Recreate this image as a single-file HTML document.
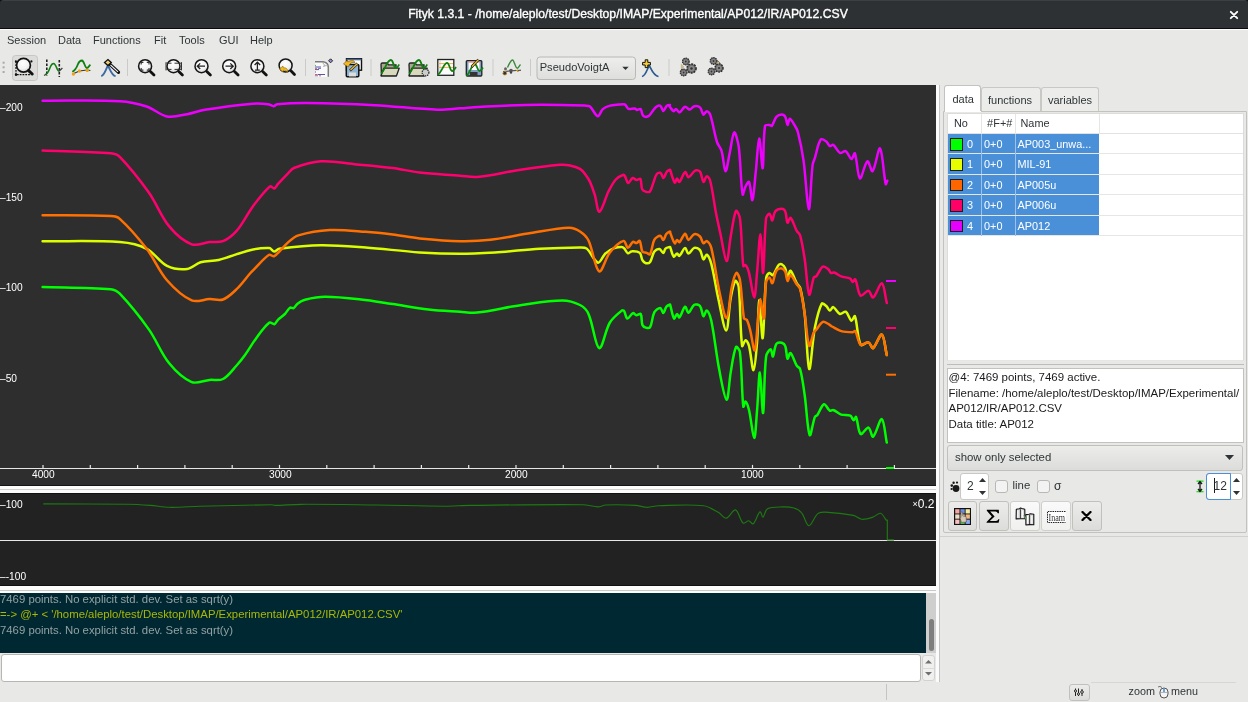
<!DOCTYPE html>
<html><head><meta charset="utf-8">
<style>
*{box-sizing:border-box}
html{background:#000}
html,body{margin:0;padding:0;width:1248px;height:702px;overflow:hidden;background:#e8e8e7;font-family:"Liberation Sans",sans-serif;font-size:11.4px;color:#2e3436}
.a{position:absolute}
#title{left:0;top:0;width:1248px;height:29px;background:#2d3133;border-top:1px solid #3b4043;border-bottom:1.5px solid #0a0a0a;border-radius:4px 4px 0 0}
#title .t{left:0;width:1256px;top:5.5px;text-align:center;color:#fff;font-weight:normal;font-size:12.2px;-webkit-text-stroke:0.35px #fff}
#menubar{left:0;top:29px;width:1248px;height:22px;background:#e8e8e7;border-top:1px solid #fcfcfc;border-bottom:1px solid #d5d5d3}
#menubar span{position:absolute;top:3.6px;font-size:11px}
#toolbar{left:0;top:50px;width:1248px;height:35px;background:#e8e8e7}
#plot{left:0;top:85px;width:936px;height:401px;background:#2e2e2e;border-bottom:1px solid #161616}
#strip1{left:0;top:486px;width:936px;height:7px;background:linear-gradient(#fdfdfd 0,#fdfdfd 3px,#d2d2cf 3px,#d2d2cf 4px,#fbfbfb 4px)}
#resid{left:0;top:493px;width:936px;height:93px;background:#222;border-top:1px solid #111;border-bottom:1px solid #111}
#strip2{left:0;top:586px;width:936px;height:7px;background:linear-gradient(#fdfdfd 0,#fdfdfd 4px,#c9c9c6 4px,#c9c9c6 5px,#fbfbfb 5px)}
#console{left:0;top:593px;width:926px;height:60px;background:#002833}
#console div{position:absolute;left:0;white-space:nowrap;font-size:11.35px;color:#93a1a1}
#cscroll{left:926px;top:593px;width:10px;height:60px;background:#cfcfce}
#cthumb{left:929px;top:619px;width:5px;height:32px;background:#7e7e7e;border-radius:3px}
#input{left:1px;top:654px;width:920px;height:28px;background:#fff;border:1px solid #b6b6b3;border-radius:3px}
#vline{left:939px;top:85px;width:1px;height:597px;background:#c4c4c2}
#vstrip{left:936px;top:85px;width:3px;height:597px;background:#fbfbfb}
#status{left:0;top:682px;width:1248px;height:20px;background:#e8e8e7}
.ax{color:#fff;font-size:10.2px;white-space:nowrap}
.tab span,.ttx,.ui,.info{position:absolute;white-space:nowrap}
.tab span{font-size:11px;color:#2e3436}
.ttx{font-size:10.9px;color:#2e3436}
.info{font-size:11.48px;line-height:15.5px;color:#1a1a1a}
.btn{background:linear-gradient(#ececeb,#dcdcda);border:1px solid #c0c0bd;border-radius:3px}
.btnl{background:linear-gradient(#fafafa,#f0f0ef);border:1px solid #cfcfcc;border-radius:3px}
.row{position:absolute;left:948px;width:295px;height:20.4px;border-bottom:1px solid #e6e6e4}
.sel{position:absolute;left:948px;width:151px;height:19.4px;background:#4a90d9}
.rtx{position:absolute;font-size:10.9px;color:#fff;white-space:nowrap}
#wrap{position:absolute;left:0;top:0;width:1248px;height:702px;will-change:transform;background:#e8e8e7}
</style></head><body><div id="wrap">
<div class="a" style="left:0;top:0;width:1248px;height:6px;background:#111"></div>
<div id="title" class="a"><div class="t a">Fityk 1.3.1 - /home/aleplo/test/Desktop/IMAP/Experimental/AP012/IR/AP012.CSV</div>
<svg class="a" style="left:1229px;top:9px" width="10" height="10" viewBox="0 0 10 10"><path d="M1.8 1.8 L8.2 8.2 M8.2 1.8 L1.8 8.2" stroke="#fff" stroke-width="1.9" stroke-linecap="round"/></svg></div>
<div id="menubar" class="a">
<span style="left:7px">Session</span><span style="left:58px">Data</span><span style="left:93px">Functions</span><span style="left:154px">Fit</span><span style="left:179px">Tools</span><span style="left:219px">GUI</span><span style="left:250px">Help</span>
</div>
<div id="toolbar" class="a"></div>
<svg class="a" style="left:0;top:50px" width="740" height="35" viewBox="0 50 740 35">
<defs>
<radialGradient id="lens" cx="0.45" cy="0.35" r="0.7"><stop offset="0" stop-color="#ffffff"/><stop offset="0.6" stop-color="#f2f2f2"/><stop offset="1" stop-color="#c8c8c8"/></radialGradient>
<g id="mag">
<circle cx="0" cy="0" r="6.5" fill="url(#lens)" stroke="#151515" stroke-width="1.5"/>
<line x1="5.3" y1="5.3" x2="8.9" y2="8.9" stroke="#111" stroke-width="2.8" stroke-linecap="round"/>
</g>
<g id="gear"><circle r="3.4" fill="#6a6a6a" stroke="#2a2a2a" stroke-width="1.1" stroke-dasharray="1.4 0.8"/><circle r="2.1" fill="#8a8a8a"/><circle r="0.9" fill="#333"/></g>
</defs>
<!-- grip -->
<g fill="#a8a8a6"><rect x="2.6" y="61.7" width="2" height="2"/><rect x="2.6" y="66.3" width="2" height="2"/><rect x="2.6" y="71" width="2" height="2"/></g>
<!-- toggle button -->
<rect x="12.5" y="55.5" width="25" height="25" rx="3" fill="#dcdcda" stroke="#c6c6c4" stroke-width="1"/>
<!-- icon1 -->
<g stroke="#111" stroke-width="1.2" fill="none"><path d="M16 61.5 L16 74.6 L31 74.6" stroke-dasharray="1.8 1"/></g>
<circle cx="15.9" cy="61.4" r="1.1" fill="#111"/><circle cx="31.4" cy="61.4" r="1.1" fill="#111"/><circle cx="16" cy="74.7" r="1.2" fill="#111"/>
<circle cx="23.5" cy="65.2" r="6.9" fill="url(#lens)" stroke="#111" stroke-width="1.7"/>
<line x1="28.6" y1="70.6" x2="32.2" y2="74" stroke="#111" stroke-width="3" stroke-linecap="round"/>
<!-- icon2 -->
<g stroke="#222" stroke-width="1.6" stroke-dasharray="2.4 1.6"><line x1="46.8" y1="59.6" x2="46.8" y2="76"/><line x1="59.3" y1="60" x2="59.3" y2="77"/></g>
<path d="M45.5 74.8 C 48.5 73, 49.5 69, 50.5 66.5 C 51.5 64.3, 52.5 63.5, 53.7 63.5 C 56 63.6, 57 71.3, 59.2 71.3" stroke="#108010" stroke-width="1.6" fill="none"/>
<path d="M59 71.3 L62.4 68 M44 75.5 L46.5 74" stroke="#444" stroke-width="1.3"/>
<!-- icon3 -->
<path d="M72.5 74 L79.5 71 L87 70 L90.4 70.5" stroke="#333" stroke-width="1.1" fill="none"/>
<path d="M72.3 71.8 C 75 70.5, 76.5 68, 77.8 64.5 C 79 61.5, 80.5 60.5, 81.9 60.5 C 84.3 60.8, 84.8 68, 86.8 68 C 88.2 68, 89 66, 90.4 64.6" stroke="#108010" stroke-width="1.8" fill="none"/>
<g fill="#f0a010"><circle cx="73.4" cy="74.1" r="1.7"/><circle cx="79.5" cy="71" r="1.7"/><circle cx="87.2" cy="70.4" r="1.7"/></g>
<!-- icon4 -->
<path d="M101.2 76.1 C 104.5 75.5, 106 69, 107.9 65.5 C 110 69, 111.5 75.5, 115.6 76.1" stroke="#3b6aa3" stroke-width="1.9" fill="none"/>
<line x1="110" y1="64.5" x2="118.5" y2="72.3" stroke="#111" stroke-width="3.2" stroke-linecap="round"/>
<line x1="110.5" y1="65" x2="118" y2="71.8" stroke="#eee" stroke-width="1.1"/>
<path d="M107.9 59.5 L111.3 62.5 L107.9 65.6 L104.5 62.5 Z" fill="#f0cc70" stroke="#111" stroke-width="1.3"/>
<!-- separators -->
<g stroke="#cacac8" stroke-width="1"><line x1="127.5" y1="59" x2="127.5" y2="76"/><line x1="305.5" y1="59" x2="305.5" y2="76"/><line x1="371" y1="59" x2="371" y2="76"/><line x1="493" y1="59" x2="493" y2="76"/><line x1="530.5" y1="59" x2="530.5" y2="76"/><line x1="669" y1="59" x2="669" y2="76"/></g>
<!-- zoom icons -->
<use href="#mag" x="145.1" y="66.2"/>
<g stroke="#333" stroke-width="1.1" fill="none"><path d="M141.2 64.6 V62.4 H143.4 M146.8 62.4 H149 V64.6 M149 67.9 V70.1 H146.8 M143.4 70.1 H141.2 V67.9"/></g>
<use href="#mag" x="173.5" y="66.2"/>
<g stroke="#333" stroke-width="1"><line x1="166.5" y1="63.2" x2="171.5" y2="63.2"/><line x1="174.5" y1="63.2" x2="181" y2="63.2"/><line x1="166.5" y1="69.4" x2="171.5" y2="69.4"/><line x1="174.5" y1="69.4" x2="181" y2="69.4"/><line x1="166" y1="62.2" x2="166" y2="70.4"/><line x1="181.5" y1="62.2" x2="181.5" y2="70.4"/></g>
<use href="#mag" x="201.5" y="66.2"/>
<path d="M205 66.2 H197.5 M200.2 63.4 L197.3 66.2 L200.2 69" stroke="#222" stroke-width="1.3" fill="none"/>
<use href="#mag" x="229.2" y="66.2"/>
<path d="M225.5 66.2 H233 M230.3 63.4 L233.2 66.2 L230.3 69" stroke="#222" stroke-width="1.3" fill="none"/>
<use href="#mag" x="257.4" y="66.2"/>
<path d="M257.4 70 V62.3 M254.6 65 L257.4 62.2 L260.2 65 M255 70.2 H259.8" stroke="#222" stroke-width="1.3" fill="none"/>
<use href="#mag" x="285.6" y="65.5"/>
<path d="M279.5 69 L283 66 L283.3 67.8 C 286 67.6, 288 68.5, 287.5 72.5 C 286.5 70.5, 285 70.2, 283.3 70.3 L283 72 Z" fill="#f4bb20" stroke="#8a6a10" stroke-width="0.6"/>
<!-- icon11 doc -->
<rect x="315" y="62" width="13" height="15" fill="#fafafa"/>
<path d="M315 61.8 H323 Q328.2 62.5 328.3 67 V76.8" stroke="#7a7a7a" stroke-width="1.5" fill="none"/>
<path d="M322.5 62.5 Q 326 65.5 323.5 66.5 Q 327 64.5 328 67" stroke="#999" stroke-width="0.8" fill="#eee"/>
<g stroke-width="0.9"><line x1="315" y1="65.4" x2="316" y2="65.4" stroke="#3a3"/><line x1="315" y1="67" x2="321" y2="67" stroke="#44a"/><line x1="315" y1="68.4" x2="317" y2="68.4" stroke="#e53"/><line x1="318" y1="68.4" x2="321" y2="68.4" stroke="#66a"/><line x1="315" y1="69.6" x2="319" y2="69.6" stroke="#44a"/><line x1="315" y1="72" x2="316" y2="72" stroke="#44a"/><line x1="315" y1="74.5" x2="317" y2="74.5" stroke="#e43"/><line x1="317.5" y1="74.5" x2="325" y2="74.5" stroke="#44a"/><line x1="315" y1="75.8" x2="318" y2="75.8" stroke="#66a"/><line x1="319" y1="75.8" x2="321" y2="75.8" stroke="#e53"/></g>
<path d="M330.6 58.8 L332.6 60.8 L330.6 62.8 L328.6 60.8 Z" fill="#9a8ad8" stroke="#222" stroke-width="1"/>
<!-- icon12 -->
<rect x="346.5" y="58.7" width="15" height="11.5" fill="#fff" stroke="#111" stroke-width="1.4"/>
<rect x="346.5" y="58.7" width="15" height="1.6" fill="#4a6890"/>
<rect x="346.3" y="64.5" width="12.5" height="12.2" rx="1" fill="#90b4d4" stroke="#111" stroke-width="1.5"/>
<rect x="349" y="72.5" width="7" height="4" fill="#ddd"/>
<path d="M343.5 64 L347.5 60 L347.8 62 C 351 60, 354 60, 355 62.5 C 352 62, 350 63, 349 65.5 L 348.5 67 Z" fill="#f4b820" stroke="#6a5010" stroke-width="0.6"/>
<line x1="350" y1="70.5" x2="357.5" y2="63.5" stroke="#222" stroke-width="2.4"/>
<line x1="350.5" y1="70" x2="357.5" y2="63.5" stroke="#f0c030" stroke-width="1.3"/>
<!-- icon13 folder -->
<g id="fold">
<path d="M381 64.5 Q381 63 382.5 63 L387 63 L388.5 64.8 L396 64.8 L396 75.8 L381.5 75.8 Z" fill="#a8a890" stroke="#222" stroke-width="1.3"/>
<path d="M383.8 68.2 L399.2 68.2 L396.5 75.8 L381 75.8 Z" fill="#d8d8bc" stroke="#222" stroke-width="1.3" stroke-linejoin="round"/>
</g>
<path d="M381 73.5 C 385 70.5, 387 59.5, 391 60 C 393.5 60.3, 393.8 68.5, 396 68.2 C 397.3 68, 398 66, 399.3 64.5" stroke="#108010" stroke-width="1.8" fill="none"/>
<use href="#fold" x="28" y="0"/>
<path d="M409 73.5 C 413 70.5, 415 59.5, 419 60 C 421.5 60.3, 421.8 68.5, 424 68.2 C 425.3 68, 426 66, 427.3 64.5" stroke="#108010" stroke-width="1.8" fill="none"/>
<circle cx="425.5" cy="72.5" r="3.4" fill="#ccc" stroke="#222" stroke-width="1.2" stroke-dasharray="1.4 0.8"/>
<!-- icon15 chart -->
<rect x="437.8" y="59.5" width="16" height="15.8" fill="#fbfbfb" stroke="#222" stroke-width="1.3"/>
<line x1="440" y1="60" x2="440" y2="75" stroke="#b8c8e0" stroke-width="0.8"/>
<g stroke="#f0b040" stroke-width="1"><line x1="438.5" y1="63.6" x2="453" y2="63.6"/><line x1="438.5" y1="67.4" x2="453" y2="67.4"/></g>
<path d="M437.5 75 C 442 72, 444 62.8, 447 62.8 C 449.5 63, 450 71, 452 71 C 453.5 71, 454.8 69, 456 67" stroke="#108010" stroke-width="1.8" fill="none"/>
<!-- icon16 disk -->
<rect x="466.3" y="60.6" width="15.5" height="15.4" rx="1" fill="#7c9cc4" stroke="#222" stroke-width="1.3"/>
<rect x="468.5" y="61.5" width="11" height="8.5" fill="#fff"/>
<line x1="468.5" y1="62" x2="479.5" y2="62" stroke="#e05050" stroke-width="0.9"/>
<rect x="470" y="72" width="7.5" height="4" fill="#333"/>
<path d="M466.5 75.8 C 470 73, 472 64, 474.5 64 C 477 64, 477.5 71, 479.5 71 C 480.8 71, 481.5 69, 483 67.5" stroke="#108010" stroke-width="1.8" fill="none"/>
<line x1="471.5" y1="67" x2="478.5" y2="59.6" stroke="#222" stroke-width="2.6"/>
<line x1="472" y1="66.5" x2="478.5" y2="59.6" stroke="#f0c030" stroke-width="1.3"/>
<!-- icon17 -->
<path d="M507.5 67.5 C 509.5 63, 511 60, 512.6 60 C 514 60, 515.5 68.3, 517.2 68.3 C 518.3 68.3, 519 66, 520.5 64.5" stroke="#3a8a3a" stroke-width="1.4" fill="none"/>
<path d="M503 71.5 L521 70.2" stroke="#333" stroke-width="1"/>
<circle cx="504.8" cy="73.2" r="1.9" fill="#333" stroke="#c89a30" stroke-width="0.7"/>
<circle cx="505.5" cy="68.7" r="1.5" fill="#666"/>
<circle cx="511" cy="70.5" r="1.8" fill="#555"/><circle cx="511" cy="72.6" r="1.2" fill="#444"/>
<path d="M515.5 70 L519 71.5 M517.5 69.5 L517.5 72" stroke="#c89a30" stroke-width="0.9"/>
<!-- combo -->
<rect x="537" y="57" width="98.5" height="22.5" rx="3" fill="url(#cg)" stroke="#b8b8b5" stroke-width="1"/>
<defs><linearGradient id="cg" x1="0" y1="0" x2="0" y2="1"><stop offset="0" stop-color="#eeeeed"/><stop offset="1" stop-color="#dededc"/></linearGradient></defs>
<path d="M622.3 66.7 H628.7 L625.5 69.9 Z" fill="#2e3436"/>
<!-- icon19 -->
<path d="M642 76.5 C 645.5 76, 647 69.5, 649.2 65.5 C 651.5 69.5, 653.5 76, 658.5 76.5" stroke="#2a5a90" stroke-width="1.7" fill="none"/>
<path d="M645.2 59.8 H647.8 V62.4 H650.4 V65 H647.8 V67.6 H645.2 V65 H642.6 V62.4 H645.2 Z" fill="#f8cc30" stroke="#111" stroke-width="1"/>
<!-- icon20 gears -->
<path d="M680.8 63.5 L684.5 67 L680.8 70.5 Z" fill="#c8b890"/>
<use href="#gear" x="685.8" y="61.5"/>
<g transform="translate(691.5 68.5) scale(1.35)"><use href="#gear"/></g>
<use href="#gear" x="683.6" y="72.5"/>
<!-- icon21 -->
<path d="M712 60.5 C 718 59, 722 63, 720.5 68.5 L 718 70 C 718.5 66, 716.5 63.5, 712.5 63.5 Z" fill="#c8b890" stroke="#555" stroke-width="0.7"/>
<use href="#gear" x="713.5" y="61"/>
<g transform="translate(719 68) scale(1.2)"><use href="#gear"/></g>
<use href="#gear" x="711.5" y="71.5"/>
</svg>
<div class="a" style="left:539.7px;top:60.8px;font-size:11.1px;color:#2e3436;white-space:nowrap">PseudoVoigtA</div>

<div id="plot" class="a"></div>
<svg class="a" style="left:0;top:85px" width="936" height="401" viewBox="0 85 936 401">
<g stroke="#e6e6e6" stroke-width="1.2" fill="none">
<line x1="0" y1="468.5" x2="936" y2="468.5"/>
<line x1="43.0" y1="464.9" x2="43.0" y2="468.5"/>
<line x1="90.3" y1="464.9" x2="90.3" y2="468.5"/>
<line x1="137.6" y1="464.9" x2="137.6" y2="468.5"/>
<line x1="184.9" y1="464.9" x2="184.9" y2="468.5"/>
<line x1="232.2" y1="464.9" x2="232.2" y2="468.5"/>
<line x1="279.5" y1="464.9" x2="279.5" y2="468.5"/>
<line x1="326.8" y1="464.9" x2="326.8" y2="468.5"/>
<line x1="374.1" y1="464.9" x2="374.1" y2="468.5"/>
<line x1="421.4" y1="464.9" x2="421.4" y2="468.5"/>
<line x1="468.7" y1="464.9" x2="468.7" y2="468.5"/>
<line x1="516.0" y1="464.9" x2="516.0" y2="468.5"/>
<line x1="563.3" y1="464.9" x2="563.3" y2="468.5"/>
<line x1="610.6" y1="464.9" x2="610.6" y2="468.5"/>
<line x1="657.9" y1="464.9" x2="657.9" y2="468.5"/>
<line x1="705.2" y1="464.9" x2="705.2" y2="468.5"/>
<line x1="752.5" y1="464.9" x2="752.5" y2="468.5"/>
<line x1="799.8" y1="464.9" x2="799.8" y2="468.5"/>
<line x1="847.1" y1="464.9" x2="847.1" y2="468.5"/>
<line x1="894.4" y1="464.9" x2="894.4" y2="468.5"/>
</g>
<path fill="none" stroke="#00ff00" stroke-width="2.5" stroke-linejoin="round" stroke-linecap="round" d="M42.6 287.0 C65.3 287.7 88.4 287.3 110.8 289.2 C114.1 289.5 117.5 291.3 119.8 293.7 C130.3 304.8 140.1 317.1 149.0 329.6 C156.6 340.3 161.0 353.3 169.2 363.3 C175.3 370.8 183.4 378.7 191.7 382.1 C196.8 384.2 203.6 380.5 209.6 379.9 C214.1 379.5 219.3 381.0 223.0 379.0 C228.3 376.2 232.3 370.2 236.6 365.5 C239.6 362.2 242.4 358.6 245.0 355.0 C249.0 349.4 252.3 343.4 256.4 337.9 C260.4 332.5 264.7 326.1 269.5 322.5 C270.7 321.6 273.1 324.7 274.4 324.2 C275.9 323.7 276.7 321.0 278.1 319.6 C280.2 317.6 282.8 316.1 284.9 314.0 C286.8 312.1 288.0 309.0 290.0 307.7 C290.9 307.1 292.6 308.7 293.5 308.2 C295.1 307.4 295.9 304.9 297.5 303.7 C299.7 302.0 302.3 300.4 305.0 299.7 C311.6 298.1 318.5 296.8 325.3 296.8 C337.2 296.8 349.3 298.2 361.2 299.5 C371.7 300.6 382.2 302.5 392.7 304.0 C404.7 305.8 416.6 308.0 428.6 309.4 C439.0 310.6 449.5 311.0 460.0 311.7 C465.7 312.1 471.4 313.2 477.0 312.6 C492.0 311.0 506.8 307.0 521.8 304.9 C535.2 303.0 548.9 300.4 562.3 300.4 C568.3 300.4 574.8 302.3 580.0 305.0 C583.5 306.8 586.9 310.2 588.5 313.9 C593.3 324.6 595.2 346.5 599.2 348.1 C602.3 349.4 605.2 330.3 609.9 322.5 C612.8 317.7 617.7 313.9 621.9 310.5 C622.4 310.1 623.6 310.4 624.0 310.9 C625.5 313.1 625.8 318.2 627.4 318.6 C628.8 319.0 631.0 313.9 633.0 313.1 C634.0 312.7 635.2 315.1 636.4 315.2 C637.8 315.3 640.1 313.0 640.7 313.9 C642.1 316.2 641.2 321.7 642.4 325.0 C642.9 326.3 644.5 327.2 645.8 327.6 C647.1 328.0 649.5 328.3 650.1 327.2 C652.3 323.2 652.1 316.6 654.4 312.2 C655.5 310.1 658.7 307.7 660.3 307.9 C661.6 308.0 662.4 313.3 663.3 313.1 C664.4 312.9 664.9 308.5 666.3 306.7 C667.1 305.6 668.9 304.9 670.0 304.5 C670.2 304.4 670.2 305.0 670.3 305.3 C671.6 309.7 672.5 316.4 674.1 318.5 C674.7 319.3 676.1 314.2 677.1 314.0 C677.9 313.8 678.7 318.0 679.4 317.4 C681.4 315.6 683.2 307.7 685.1 306.7 C686.2 306.1 687.2 313.1 688.5 312.8 C690.3 312.4 691.8 306.2 694.2 304.8 C695.6 303.9 698.9 304.7 700.0 306.0 C702.0 308.5 702.0 315.3 703.4 316.2 C704.3 316.8 705.8 309.9 706.8 310.5 C708.5 311.5 710.5 317.2 711.3 320.8 C714.7 337.0 716.1 353.8 719.3 370.1 C721.2 380.1 724.6 399.4 726.6 399.8 C728.4 400.2 729.1 381.5 730.7 372.4 C732.2 363.9 733.5 352.4 736.0 346.9 C736.6 345.6 739.6 349.8 739.9 351.9 C742.1 369.7 741.6 391.5 743.3 406.6 C743.5 408.1 744.9 401.2 745.6 401.6 C746.8 402.3 748.3 407.1 749.0 410.0 C751.2 419.2 752.8 437.9 754.2 438.1 C755.5 438.3 756.2 420.2 757.0 411.2 C758.1 398.3 758.9 372.1 759.9 372.4 C760.9 372.7 762.2 415.2 763.1 413.0 C764.3 409.9 763.9 375.0 766.1 356.5 C766.4 353.7 769.5 349.2 770.7 349.2 C771.8 349.2 772.2 357.2 772.9 356.5 C774.1 355.4 774.3 347.1 776.4 343.9 C777.3 342.5 780.2 342.4 781.8 342.8 C783.2 343.2 784.8 344.7 785.3 346.2 C786.7 350.0 786.4 357.2 787.5 358.7 C788.1 359.5 789.5 352.3 790.5 353.0 C792.6 354.6 794.3 361.6 796.7 365.6 C797.5 367.0 799.7 367.5 800.1 369.0 C802.4 377.4 803.4 386.4 804.7 395.2 C806.6 408.5 807.4 430.2 809.7 435.1 C810.8 437.4 812.7 422.6 814.9 416.9 C815.2 416.0 816.7 416.0 817.2 415.3 C819.7 411.8 821.5 405.2 824.0 404.3 C825.7 403.7 827.6 409.3 829.8 410.7 C830.7 411.2 832.2 409.6 833.2 410.0 C836.0 410.9 838.3 413.6 841.2 414.6 C844.0 415.5 847.7 414.5 850.3 415.7 C851.9 416.4 852.6 420.1 853.7 420.3 C854.5 420.5 855.6 416.0 856.0 416.9 C857.9 420.6 858.0 431.7 860.6 434.0 C862.1 435.3 866.4 427.2 868.5 427.6 C870.6 428.1 871.6 437.7 873.1 436.7 C876.0 434.8 879.7 418.2 881.8 419.1 C884.3 420.2 885.1 434.8 886.8 442.6"/>
<path fill="none" stroke="#dcff00" stroke-width="2.5" stroke-linejoin="round" stroke-linecap="round" d="M42.6 241.2 C68.3 241.5 94.3 240.2 119.8 242.1 C129.0 242.8 138.7 244.7 146.7 248.8 C154.4 252.7 159.4 262.1 167.0 265.9 C172.9 268.8 180.7 269.7 187.2 269.0 C191.9 268.5 195.9 263.7 200.6 262.3 C206.3 260.7 212.7 261.4 218.6 260.0 C229.2 257.4 239.4 252.7 250.0 250.2 C256.2 248.7 263.1 247.7 269.2 248.0 C271.1 248.1 272.5 251.4 274.2 251.5 C275.8 251.6 277.3 249.1 279.2 248.8 C292.9 247.0 306.9 245.4 320.8 245.2 C335.7 245.0 350.8 246.4 365.7 247.5 C383.7 248.8 401.6 251.2 419.6 252.4 C433.0 253.3 446.5 253.8 460.0 253.8 C471.6 253.8 483.3 253.1 494.9 252.4 C509.9 251.5 524.8 249.7 539.8 248.8 C553.2 248.0 566.6 247.5 580.0 247.4 C582.3 247.4 585.1 247.2 586.8 248.6 C591.1 252.3 594.3 261.8 598.0 262.7 C600.5 263.3 602.6 255.9 605.6 253.3 C608.0 251.1 611.1 249.4 614.2 248.2 C616.6 247.3 619.4 246.8 621.9 246.9 C622.8 246.9 623.7 247.9 624.4 248.6 C625.7 250.0 626.5 252.8 627.9 253.3 C629.0 253.7 630.6 251.2 632.1 251.2 C634.6 251.1 638.1 251.4 639.8 252.9 C641.5 254.4 641.1 258.0 642.4 260.2 C643.1 261.5 644.5 262.9 645.8 263.2 C647.1 263.5 649.3 263.0 650.1 261.9 C652.1 259.1 652.3 254.4 654.4 251.6 C655.5 250.2 658.0 248.9 659.5 249.1 C660.9 249.3 662.2 253.0 663.3 252.9 C664.2 252.8 664.4 249.6 665.5 248.6 C666.6 247.6 668.6 247.3 670.0 246.9 C670.2 246.9 670.2 247.2 670.3 247.4 C671.5 250.4 672.1 255.1 673.7 256.5 C674.4 257.2 676.0 253.7 677.1 253.6 C677.9 253.5 678.7 256.3 679.4 255.8 C681.4 254.4 683.3 248.3 685.1 247.9 C686.3 247.6 687.1 253.6 688.5 253.6 C690.2 253.6 692.0 248.6 694.2 247.9 C695.9 247.4 698.8 248.6 700.0 250.1 C701.9 252.4 702.0 258.3 703.4 259.3 C704.2 259.9 705.9 254.2 706.8 254.7 C708.5 255.7 710.4 260.5 711.3 263.8 C714.2 275.0 715.7 286.7 718.2 298.0 C720.6 308.9 724.1 330.4 726.2 330.4 C728.3 330.4 728.7 308.7 730.7 298.0 C731.8 292.2 733.4 283.7 735.3 280.9 C736.0 279.9 738.5 284.4 738.7 286.6 C740.7 306.1 740.0 329.8 742.1 345.9 C742.3 347.7 744.4 340.2 745.6 340.2 C746.7 340.2 748.4 343.8 749.0 345.9 C751.1 353.8 752.2 370.6 753.5 370.1 C754.9 369.6 756.3 351.9 757.0 342.8 C758.2 328.7 758.2 301.1 759.2 300.3 C760.1 299.6 761.8 341.0 762.7 338.2 C764.1 333.8 764.1 298.2 766.1 278.6 C766.3 276.4 768.1 273.6 769.5 272.9 C770.4 272.5 772.1 275.9 772.9 275.2 C775.1 273.3 776.3 267.8 778.6 265.0 C779.2 264.2 781.0 263.9 781.8 264.3 C783.2 265.0 784.7 266.8 785.3 268.4 C786.6 271.5 786.5 278.2 787.5 278.6 C788.3 278.9 789.3 270.1 790.5 270.7 C792.4 271.7 794.4 279.2 796.7 283.2 C797.6 284.8 799.6 285.9 800.1 287.7 C802.3 296.2 803.7 305.2 804.7 314.0 C806.7 332.3 807.3 366.4 809.2 369.0 C810.7 371.0 812.3 341.2 814.9 327.6 C816.5 319.5 818.6 309.7 821.8 303.7 C822.4 302.5 825.0 304.9 826.3 306.0 C827.7 307.2 828.6 310.3 829.8 310.5 C830.9 310.7 832.1 306.7 833.2 307.1 C835.5 307.9 837.5 313.1 840.0 314.0 C841.6 314.6 844.3 310.9 845.7 311.7 C848.1 313.1 849.4 319.8 851.4 320.8 C852.5 321.3 854.4 314.9 854.9 316.2 C857.5 322.8 857.1 337.9 860.6 344.7 C861.6 346.6 866.3 341.8 868.5 342.4 C870.5 342.9 871.7 348.9 873.1 348.1 C876.1 346.3 879.8 333.5 881.8 334.5 C884.4 335.8 885.1 348.2 886.8 355.0"/>
<path fill="none" stroke="#ff7000" stroke-width="2.5" stroke-linejoin="round" stroke-linecap="round" d="M42.6 215.2 C65.3 215.5 88.2 215.0 110.8 216.1 C113.9 216.2 117.5 216.7 119.8 218.8 C129.5 227.6 138.5 238.2 146.7 248.8 C154.3 258.7 158.9 270.9 167.0 280.2 C173.9 288.1 182.6 296.4 191.7 300.4 C196.8 302.7 203.6 299.3 209.6 299.1 C214.1 299.0 219.0 301.0 223.0 299.5 C228.0 297.7 232.5 293.1 236.6 289.2 C241.5 284.5 245.5 278.7 250.0 273.5 C251.6 271.7 253.3 270.0 255.0 268.3 C259.7 263.7 264.1 258.0 269.2 254.8 C270.5 254.0 272.9 257.1 274.2 256.2 C279.1 253.0 283.0 246.8 287.8 242.6 C291.0 239.8 294.4 236.6 298.4 235.4 C308.4 232.4 319.3 230.6 329.8 230.0 C341.7 229.4 353.8 230.9 365.7 231.8 C374.7 232.4 383.7 233.4 392.7 234.5 C401.7 235.6 410.6 237.6 419.6 238.5 C433.0 239.8 446.5 241.0 460.0 241.2 C470.1 241.4 480.3 241.0 490.4 239.8 C503.9 238.3 517.3 235.2 530.8 233.1 C543.5 231.1 556.4 228.1 569.0 227.7 C572.8 227.6 576.9 229.4 580.0 231.5 C583.4 233.7 586.7 236.8 588.5 240.5 C593.1 250.1 594.9 268.9 599.2 271.3 C602.0 272.9 605.5 258.0 609.9 252.5 C613.6 247.9 619.5 242.0 623.6 240.9 C625.5 240.4 626.3 247.6 627.9 247.8 C629.4 247.9 631.1 242.9 633.0 241.8 C633.9 241.3 635.3 243.2 636.4 243.1 C637.6 242.9 639.3 240.1 639.8 240.9 C641.3 243.0 640.8 248.8 642.4 251.6 C643.1 252.8 645.3 252.4 646.7 252.9 C647.8 253.3 649.6 255.1 650.1 254.2 C652.2 250.7 652.1 243.9 654.4 239.7 C655.5 237.7 658.6 235.7 660.3 235.8 C661.6 235.9 662.4 240.3 663.3 240.1 C664.4 239.8 665.0 235.8 666.3 234.1 C667.2 232.9 669.0 231.8 670.0 231.5 C670.3 231.4 670.1 232.5 670.3 233.0 C671.7 236.5 673.1 241.6 674.8 243.3 C675.4 243.9 676.2 240.1 677.1 239.9 C677.8 239.7 678.8 242.7 679.4 242.2 C681.4 240.6 683.3 234.2 685.1 233.7 C686.3 233.4 687.1 239.8 688.5 239.9 C690.1 240.0 692.0 234.8 694.2 234.2 C695.9 233.7 698.6 235.1 700.0 236.5 C701.7 238.2 701.9 242.3 703.4 243.3 C704.2 243.8 705.9 240.5 706.8 241.0 C708.6 242.0 710.6 245.3 711.3 247.9 C714.8 262.0 716.2 276.9 719.3 291.2 C721.3 300.3 724.6 318.8 726.6 318.1 C728.8 317.3 729.6 297.0 731.9 286.6 C732.9 281.9 734.7 274.4 736.4 272.9 C737.3 272.1 739.5 277.3 739.9 279.8 C742.0 292.5 741.9 306.1 744.0 318.5 C744.2 319.4 746.3 318.9 746.7 319.7 C748.3 322.7 749.2 326.4 750.1 329.9 C751.9 336.7 753.6 351.9 754.7 350.4 C756.3 348.1 756.9 329.1 758.1 318.5 C758.8 312.0 759.5 299.1 760.4 299.1 C761.4 299.1 763.1 320.5 763.8 318.5 C765.0 314.8 764.5 293.8 766.1 282.0 C766.4 280.2 768.5 277.3 769.5 277.5 C770.6 277.7 771.6 283.9 772.3 283.2 C773.9 281.7 774.2 274.1 776.4 270.7 C777.4 269.2 780.2 268.2 781.8 268.4 C783.1 268.6 784.6 270.4 785.3 271.8 C786.5 274.5 786.5 280.2 787.5 280.9 C788.2 281.4 789.4 274.8 790.5 275.2 C792.4 275.9 794.6 281.3 796.7 284.3 C797.8 285.9 799.6 287.1 800.1 288.9 C802.3 297.0 803.4 305.6 804.7 314.0 C806.4 324.6 807.1 341.7 809.2 345.9 C810.1 347.8 811.9 336.6 813.8 332.2 C814.2 331.2 815.4 330.7 816.1 329.9 C818.4 327.3 820.3 323.1 822.9 321.9 C824.4 321.2 826.8 323.3 828.6 324.2 C829.8 324.8 830.8 325.8 832.0 326.5 C835.0 328.1 838.0 330.2 841.2 331.1 C844.8 332.1 848.9 332.2 852.6 332.2 C853.6 332.2 854.9 330.4 855.3 331.1 C857.5 334.6 857.8 342.3 860.6 344.7 C862.2 346.1 866.3 341.8 868.5 342.4 C870.5 342.9 871.7 348.9 873.1 348.1 C876.1 346.3 879.8 333.5 881.8 334.5 C884.4 335.8 885.1 348.2 886.8 355.0"/>
<path fill="none" stroke="#ff006e" stroke-width="2.5" stroke-linejoin="round" stroke-linecap="round" d="M42.6 150.5 C65.3 151.4 88.3 151.4 110.8 153.2 C114.0 153.5 117.6 154.5 119.8 156.8 C130.3 167.7 140.1 180.2 149.0 192.7 C156.6 203.4 161.0 216.5 169.2 226.4 C175.2 233.7 183.4 241.1 191.7 244.3 C196.9 246.3 203.6 242.7 209.6 242.1 C214.1 241.7 219.0 242.8 223.0 241.2 C228.0 239.1 232.9 235.1 236.6 230.9 C241.9 224.9 245.5 217.4 250.0 210.7 C251.6 208.3 253.1 205.8 255.0 203.5 C259.8 197.7 264.7 190.5 270.0 186.4 C271.1 185.5 273.0 188.8 274.2 188.5 C275.6 188.1 276.5 185.6 277.8 184.2 C281.1 180.6 284.4 177.0 287.8 173.6 C289.7 171.6 291.4 168.9 293.9 168.0 C302.4 164.8 311.7 161.8 320.8 161.3 C332.6 160.6 344.7 163.3 356.7 164.4 C368.7 165.5 380.7 166.5 392.7 168.0 C401.7 169.2 410.6 171.5 419.6 172.5 C433.0 174.0 446.5 174.6 460.0 175.7 C465.7 176.1 471.4 177.5 477.0 177.0 C490.5 175.7 503.9 172.3 517.4 170.3 C531.6 168.2 545.8 166.1 560.0 164.8 C563.3 164.5 566.8 164.8 570.0 165.5 C573.4 166.2 577.0 167.2 580.0 168.9 C582.0 170.0 583.6 172.0 585.0 173.9 C586.9 176.4 588.7 179.1 590.0 181.9 C591.9 186.1 593.4 190.5 594.8 194.9 C596.5 200.4 597.4 212.3 599.4 211.7 C602.1 210.9 605.4 197.6 608.8 190.8 C610.8 186.9 612.8 182.9 615.6 179.7 C617.5 177.6 620.4 175.9 622.9 175.0 C623.6 174.7 624.6 175.5 625.0 176.2 C626.3 178.2 626.7 182.8 628.0 183.1 C629.2 183.4 631.0 178.6 632.7 178.0 C633.8 177.6 635.3 180.0 636.6 180.1 C637.8 180.2 639.9 178.0 640.4 178.8 C641.7 181.0 640.9 186.1 642.1 189.1 C642.6 190.3 644.3 191.2 645.6 191.6 C646.9 192.0 649.0 192.5 649.8 191.6 C651.5 189.7 652.1 185.9 653.2 183.1 C654.4 180.1 655.0 176.5 656.7 174.1 C657.4 173.1 659.6 172.3 660.5 172.8 C661.9 173.6 662.5 178.2 663.5 178.0 C664.7 177.8 665.4 173.3 666.9 171.5 C667.6 170.6 669.1 170.1 670.0 169.8 C670.2 169.7 670.2 170.3 670.3 170.5 C671.8 174.5 673.1 180.7 674.8 182.6 C675.4 183.3 676.3 178.5 677.1 178.4 C677.8 178.3 678.7 182.5 679.4 181.9 C681.3 180.4 683.1 173.1 685.1 172.1 C686.2 171.6 687.2 177.5 688.5 177.3 C690.6 177.0 692.8 171.8 695.4 170.5 C696.7 169.9 699.2 170.4 700.0 171.6 C701.9 174.2 702.0 180.9 703.4 181.9 C704.3 182.5 705.6 176.4 706.8 176.2 C707.8 176.0 709.8 178.9 710.2 180.7 C712.8 191.0 713.9 202.0 715.9 212.6 C717.3 219.8 718.9 227.0 720.5 234.2 C722.5 243.2 724.8 260.7 726.6 261.1 C728.2 261.5 729.2 244.7 730.7 236.5 C732.3 227.9 733.7 215.5 736.0 210.9 C736.7 209.4 739.5 215.5 739.9 218.2 C742.0 233.9 741.5 251.3 743.3 266.1 C743.4 266.9 745.2 264.5 745.6 265.0 C747.1 266.7 748.3 270.1 749.0 272.9 C751.1 281.0 752.9 297.5 754.2 297.5 C755.5 297.5 756.2 281.1 757.0 272.9 C758.3 260.0 759.4 234.2 760.4 234.2 C761.4 234.2 762.3 275.1 763.1 272.9 C764.2 269.8 764.2 236.1 766.1 218.2 C766.3 216.4 768.6 213.4 769.5 213.7 C770.7 214.1 771.5 220.8 772.3 220.5 C773.4 220.1 773.4 213.7 775.2 211.4 C776.6 209.7 779.7 208.7 781.8 208.7 C783.1 208.7 784.8 210.1 785.3 211.4 C786.7 214.8 786.3 221.4 787.5 222.8 C788.1 223.5 789.6 217.0 790.5 217.8 C792.7 219.7 794.4 226.6 796.7 230.8 C797.6 232.4 799.6 233.5 800.1 235.3 C802.3 243.0 803.5 251.3 804.7 259.3 C806.5 271.0 807.2 290.5 809.2 294.6 C810.2 296.6 811.8 282.8 813.8 277.5 C814.1 276.7 815.6 277.0 816.1 276.4 C818.6 273.4 820.2 268.1 822.9 266.6 C824.4 265.8 827.0 268.2 828.6 269.5 C829.6 270.3 829.9 272.4 830.9 272.9 C831.8 273.4 833.3 272.1 834.3 272.5 C836.7 273.3 838.8 275.5 841.2 276.4 C844.1 277.5 847.7 277.3 850.3 278.6 C851.5 279.2 851.7 281.9 852.6 282.0 C853.4 282.1 854.8 278.5 855.3 279.3 C857.5 283.0 857.7 293.2 860.6 295.7 C862.1 297.0 866.3 290.4 868.5 290.7 C870.4 291.0 871.6 298.3 873.1 297.5 C876.1 295.8 879.7 282.4 881.8 283.2 C884.3 284.2 885.1 296.4 886.8 303.0"/>
<path fill="none" stroke="#ee00ff" stroke-width="2.5" stroke-linejoin="round" stroke-linecap="round" d="M42.6 100.7 C68.3 100.9 94.2 99.8 119.8 101.2 C128.9 101.7 138.1 103.7 146.7 106.5 C153.8 108.8 159.9 115.0 167.0 116.4 C173.4 117.6 180.5 115.4 187.2 114.2 C193.2 113.1 199.0 110.7 205.0 109.7 C219.9 107.3 235.0 105.2 250.0 103.9 C256.0 103.4 262.1 103.6 268.0 104.2 C270.0 104.4 271.9 106.2 273.7 106.2 C274.9 106.2 275.7 104.3 277.0 104.2 C287.0 103.3 297.3 102.9 307.4 103.0 C329.8 103.2 352.3 104.0 374.7 105.2 C395.7 106.3 416.6 108.9 437.6 109.7 C445.1 110.0 452.5 108.8 460.0 108.3 C468.6 107.7 477.3 106.9 485.9 106.5 C503.9 105.7 521.8 104.9 539.8 104.7 C554.8 104.6 569.8 105.1 584.7 105.6 C586.5 105.7 588.7 105.4 590.0 106.5 C593.0 109.0 595.2 115.7 597.7 116.2 C599.5 116.6 600.7 111.0 602.8 109.1 C604.5 107.6 606.9 106.5 609.2 105.9 C612.3 105.0 615.6 104.9 618.8 104.6 C620.8 104.4 623.2 103.8 624.9 104.5 C626.4 105.2 626.9 108.2 628.5 108.8 C630.3 109.5 632.9 108.2 634.9 108.5 C635.7 108.6 636.1 109.9 636.8 110.0 C638.0 110.1 639.8 108.5 640.6 109.1 C641.8 110.1 641.6 113.2 642.6 114.9 C643.1 115.8 644.2 116.7 645.1 116.8 C646.3 117.0 648.0 116.6 649.0 115.8 C651.0 114.1 652.3 111.2 654.1 109.1 C655.0 108.0 656.1 106.8 657.3 106.2 C658.2 105.7 659.8 105.3 660.5 105.9 C661.8 106.9 662.4 111.0 663.4 111.0 C664.5 110.9 665.4 107.0 666.9 105.6 C667.6 104.9 669.5 104.9 670.0 104.9 C670.2 104.9 668.9 105.2 669.1 105.5 C670.2 107.3 672.1 110.4 673.7 111.2 C674.4 111.5 675.2 108.7 676.0 108.9 C677.1 109.1 678.3 112.7 679.4 112.4 C681.3 111.9 683.0 107.3 685.1 106.7 C686.5 106.3 688.2 109.7 689.7 109.6 C691.2 109.5 692.5 106.6 694.2 106.2 C696.0 105.8 698.7 106.1 700.0 107.3 C701.8 108.9 702.0 113.8 703.4 114.6 C704.2 115.1 705.7 111.2 706.8 111.2 C707.9 111.2 709.7 113.1 710.2 114.6 C713.1 123.4 714.2 133.1 717.0 142.0 C718.0 145.2 720.7 147.9 721.6 151.1 C723.5 157.6 724.1 170.8 725.5 171.2 C726.8 171.6 728.3 159.3 729.6 153.4 C731.2 146.4 732.4 133.8 734.2 132.4 C735.4 131.5 738.0 141.6 738.7 146.5 C740.8 162.3 740.6 183.1 742.6 194.4 C742.9 196.4 744.3 188.9 745.6 186.4 C746.4 184.7 748.5 180.8 749.0 181.9 C750.7 185.4 751.5 201.4 752.4 200.1 C753.8 198.0 754.7 181.1 755.8 171.6 C757.0 160.6 758.0 139.2 759.2 138.6 C760.3 138.1 761.9 169.9 762.7 168.2 C763.8 165.7 763.0 139.0 765.0 126.0 C765.2 124.6 768.0 124.9 769.5 124.9 C770.3 124.9 771.3 126.5 771.8 126.0 C773.6 123.9 774.3 119.3 776.4 116.9 C777.6 115.5 780.1 114.6 781.8 114.6 C783.0 114.6 784.7 115.7 785.3 116.9 C786.6 119.2 786.7 124.6 787.5 124.9 C788.2 125.2 788.7 118.7 789.8 118.7 C791.0 118.7 793.1 122.7 794.4 124.9 C795.7 127.1 797.2 129.3 797.8 131.7 C800.2 141.0 802.1 150.6 803.5 160.2 C805.8 176.5 807.2 208.4 808.8 209.2 C810.2 209.9 810.9 179.5 812.6 164.8 C812.9 162.4 814.2 160.2 814.9 157.9 C816.8 151.8 817.7 143.9 820.6 139.7 C821.5 138.4 824.7 140.4 826.3 141.5 C827.8 142.5 828.4 145.4 829.8 146.1 C830.7 146.5 832.3 144.1 833.2 144.7 C835.7 146.4 837.3 151.5 840.0 152.9 C841.5 153.7 844.3 150.3 845.7 151.1 C848.1 152.4 849.6 158.6 851.4 159.1 C852.6 159.4 854.3 152.1 854.9 153.4 C857.1 158.5 857.5 176.9 859.9 178.4 C861.7 179.5 864.7 162.9 867.4 161.4 C869.0 160.5 871.3 172.6 872.6 171.2 C875.5 168.2 878.3 146.7 880.0 148.4 C882.6 151.0 883.5 174.3 885.7 184.1 C885.9 185.1 886.8 181.8 887.3 180.7"/>
<g stroke-width="2"><line x1="886" y1="281" x2="896" y2="281" stroke="#ee00ff"/><line x1="886" y1="328" x2="896" y2="328" stroke="#ff006e"/><line x1="886" y1="374.7" x2="896" y2="374.7" stroke="#ff7000"/><line x1="886" y1="468" x2="894" y2="468" stroke="#00ff00"/></g>
</svg>
<div class="a ax" style="left:0;top:102px">–200</div>
<div class="a ax" style="left:0;top:192px">–150</div>
<div class="a ax" style="left:0;top:282px">–100</div>
<div class="a ax" style="left:0;top:373px">–50</div>
<div class="a ax" style="left:32px;top:468.5px">4000</div>
<div class="a ax" style="left:269px;top:468.5px">3000</div>
<div class="a ax" style="left:505px;top:468.5px">2000</div>
<div class="a ax" style="left:741px;top:468.5px">1000</div>
<div id="strip1" class="a"></div>
<div id="resid" class="a"></div>
<svg class="a" style="left:0;top:493px" width="936" height="93" viewBox="0 493 936 93">
<line x1="0" y1="540.5" x2="936" y2="540.5" stroke="#e8e8e8" stroke-width="1"/>
<path fill="none" stroke="#1c7a12" stroke-width="1.15" stroke-linejoin="round" d="M43.3 503.9 C71.5 504.0 99.8 503.9 128.0 504.3 C135.6 504.4 143.1 504.9 150.7 505.4 C157.0 505.9 163.2 507.2 169.5 507.3 C179.5 507.5 189.6 506.5 199.6 506.2 C223.5 505.6 247.4 505.0 271.2 504.7 C272.5 504.7 273.7 505.4 275.0 505.4 C283.7 505.3 292.5 504.3 301.3 504.3 C326.4 504.2 351.5 504.7 376.6 505.0 C399.2 505.3 421.8 506.1 444.4 506.2 C452.9 506.2 461.5 505.5 470.0 505.4 C507.7 505.0 545.4 504.3 583.0 504.7 C588.0 504.8 593.0 506.8 598.0 506.9 C600.6 506.9 603.0 505.1 605.6 505.0 C615.6 504.6 625.7 504.8 635.7 505.4 C639.5 505.6 643.2 507.2 647.0 507.3 C650.8 507.4 654.5 505.9 658.3 505.8 C673.3 505.4 688.8 504.1 703.5 505.8 C708.9 506.4 713.8 510.0 718.6 512.6 C721.3 514.1 723.7 518.6 726.1 518.2 C729.3 517.7 732.9 509.2 735.5 509.9 C738.6 510.8 740.0 520.5 743.1 523.1 C744.4 524.1 746.9 520.7 748.7 520.8 C750.3 520.9 752.1 524.6 753.2 523.8 C755.9 521.6 757.7 513.3 760.0 511.8 C761.0 511.1 762.0 517.5 763.0 517.1 C764.5 516.5 765.0 510.1 767.5 508.8 C771.5 506.7 777.6 507.1 782.6 506.9 C786.4 506.8 790.4 506.9 793.9 508.0 C796.6 508.8 799.6 510.4 801.4 512.6 C804.6 516.3 806.2 525.6 809.0 525.7 C811.9 525.8 814.3 515.7 818.4 513.3 C821.9 511.3 827.2 512.4 831.6 512.6 C836.6 512.8 841.6 513.7 846.6 514.4 C849.1 514.7 851.8 514.8 854.2 515.6 C856.8 516.5 859.1 519.1 861.7 519.3 C865.3 519.6 869.4 518.3 873.0 517.1 C875.6 516.3 878.4 512.8 880.5 513.3 C882.8 513.8 884.3 517.8 886.2 520.1 L887.3 520.1 L887.3 539.8 L894 539.8"/>
</svg>
<div class="a ax" style="left:0;top:499px">–100</div>
<div class="a ax" style="left:0;top:571px">–-100</div>
<div class="a ax" style="left:912.5px;top:496.5px;font-size:12px"><span style="font-size:9px;position:relative;top:-0.5px">×</span>0.2</div>
<div id="strip2" class="a"></div>
<div id="console" class="a">
<div style="top:-0.2px">7469 points. No explicit std. dev. Set as sqrt(y)</div>
<div style="top:15.2px;color:#a9b800">=-&gt; @+ &lt; '/home/aleplo/test/Desktop/IMAP/Experimental/AP012/IR/AP012.CSV'</div>
<div style="top:30.6px">7469 points. No explicit std. dev. Set as sqrt(y)</div>
</div>
<div id="cscroll" class="a"></div><div id="cthumb" class="a"></div>
<div id="input" class="a"></div>
<div id="vstrip" class="a"></div>
<div id="vline" class="a"></div>
<div id="status" class="a"></div>

<!-- input spin -->
<div class="a" style="left:922px;top:655px;width:13px;height:26px;background:#f0f0ef;border:1px solid #d2d2d0;border-radius:3px"></div>
<div class="a" style="left:922px;top:668px;width:13px;height:1px;background:#dadad8"></div>
<svg class="a" style="left:924px;top:659px" width="9" height="19"><path d="M1 4.5 L4.5 1 L8 4.5 Z M1 13 L8 13 L4.5 16.5 Z" fill="#707070"/></svg>
<!-- status bar -->
<div class="a" style="left:886px;top:684px;width:1px;height:16px;background:#c4c4c2"></div>
<div class="a" style="left:1091px;top:682px;width:145px;height:1px;background:#d6d6d4"></div>
<div class="a btn" style="left:1069px;top:684px;width:21px;height:17px"></div>
<svg class="a" style="left:1074px;top:688px" width="11" height="9" viewBox="0 0 11 9"><g stroke="#222" stroke-width="1" fill="none"><path d="M1.5 0.5 V8 M4.5 0.5 V8 M8 1 V8"/><circle cx="1.5" cy="3" r="1.1" fill="#fff"/><circle cx="4.5" cy="6" r="1.1" fill="#fff"/><circle cx="8" cy="4" r="1.3" fill="#fff"/></g></svg>
<div class="a ui" style="left:1128.5px;top:685px;font-size:10.8px;color:#2e3436">zoom</div>
<svg class="a" style="left:1156px;top:685px" width="14" height="14" viewBox="0 0 14 14"><path d="M2 2 Q4 0.5 6 2.5" stroke="#555" stroke-width="0.8" fill="none"/><rect x="4" y="3" width="8" height="10" rx="4" fill="#f4f4f4" stroke="#444" stroke-width="0.9"/><path d="M8 3.5 V7" stroke="#4a90d9" stroke-width="1.6"/><line x1="4.5" y1="7.5" x2="11.5" y2="7.5" stroke="#888" stroke-width="0.6"/></svg>
<div class="a ui" style="left:1171px;top:685px;font-size:10.8px;color:#2e3436">menu</div>
<!-- RIGHT PANEL -->
<div class="a" style="left:943px;top:111px;width:304px;height:422px;border:1px solid #c2c2bf;border-radius:0 0 2px 2px"></div>
<div class="a" style="left:940px;top:536px;width:308px;height:1px;background:#d0d0ce"></div>
<div class="a tab" style="left:943.5px;top:85px;width:37.5px;height:27px;background:#ffffff;border:1px solid #c2c2bf;border-bottom:none;border-radius:3px 3px 0 0"><span style="left:8px;top:7px">data</span></div>
<div class="a tab" style="left:981px;top:87px;width:60px;height:24px;background:#ececeb;border:1px solid #c8c8c5;border-bottom:none;border-radius:3px 3px 0 0"><span style="left:6px;top:6px">functions</span></div>
<div class="a tab" style="left:1041px;top:87px;width:58px;height:24px;background:#ececeb;border:1px solid #c8c8c5;border-bottom:none;border-radius:3px 3px 0 0"><span style="left:6px;top:6px">variables</span></div>
<div class="a" style="left:944.5px;top:111px;width:36px;height:1px;background:#ffffff"></div>
<!-- table -->
<div class="a" style="left:947px;top:113px;width:297px;height:248px;background:#fff;border:1px solid #dcdcda;border-bottom-color:#e6e6e4"></div>
<div class="a hdr" style="left:948px;top:114px;width:295px;height:20px;border-bottom:1px solid #e2e2e0"></div>
<div class="a" style="left:981px;top:114px;width:1px;height:20px;background:#e6e6e4"></div>
<div class="a" style="left:1015px;top:114px;width:1px;height:20px;background:#e6e6e4"></div>
<div class="a" style="left:1099px;top:114px;width:1px;height:20px;background:#e6e6e4"></div>
<div class="a ttx" style="left:954px;top:117px">No</div>
<div class="a" style="left:982px;top:114px;width:33px;height:19px;overflow:hidden"><div class="ttx" style="left:5px;top:3px;letter-spacing:0.1px">#F+#</div></div>
<div class="a ttx" style="left:1020.5px;top:117px">Name</div>
<div class="row" style="top:134.0px"></div>
<div class="sel" style="top:134.0px"></div>
<div class="a" style="left:981px;top:134.0px;width:1px;height:20px;background:#9cc2ec"></div>
<div class="a" style="left:1015px;top:134.0px;width:1px;height:20px;background:#9cc2ec"></div>
<div class="a" style="left:950px;top:138.0px;width:12.5px;height:12.5px;background:#00ff00;border:1.6px solid #1e1e1e"></div>
<div class="rtx" style="left:967px;top:138.0px">0</div>
<div class="rtx" style="left:984px;top:138.0px">0+0</div>
<div class="rtx" style="left:1017.5px;top:138.0px">AP003_unwa...</div>
<div class="row" style="top:154.4px"></div>
<div class="sel" style="top:154.4px"></div>
<div class="a" style="left:981px;top:154.4px;width:1px;height:20px;background:#9cc2ec"></div>
<div class="a" style="left:1015px;top:154.4px;width:1px;height:20px;background:#9cc2ec"></div>
<div class="a" style="left:950px;top:158.4px;width:12.5px;height:12.5px;background:#e6ff00;border:1.6px solid #1e1e1e"></div>
<div class="rtx" style="left:967px;top:158.4px">1</div>
<div class="rtx" style="left:984px;top:158.4px">0+0</div>
<div class="rtx" style="left:1017.5px;top:158.4px">MIL-91</div>
<div class="row" style="top:174.8px"></div>
<div class="sel" style="top:174.8px"></div>
<div class="a" style="left:981px;top:174.8px;width:1px;height:20px;background:#9cc2ec"></div>
<div class="a" style="left:1015px;top:174.8px;width:1px;height:20px;background:#9cc2ec"></div>
<div class="a" style="left:950px;top:178.8px;width:12.5px;height:12.5px;background:#ff6600;border:1.6px solid #1e1e1e"></div>
<div class="rtx" style="left:967px;top:178.8px">2</div>
<div class="rtx" style="left:984px;top:178.8px">0+0</div>
<div class="rtx" style="left:1017.5px;top:178.8px">AP005u</div>
<div class="row" style="top:195.2px"></div>
<div class="sel" style="top:195.2px"></div>
<div class="a" style="left:981px;top:195.2px;width:1px;height:20px;background:#9cc2ec"></div>
<div class="a" style="left:1015px;top:195.2px;width:1px;height:20px;background:#9cc2ec"></div>
<div class="a" style="left:950px;top:199.2px;width:12.5px;height:12.5px;background:#ff0066;border:1.6px solid #1e1e1e"></div>
<div class="rtx" style="left:967px;top:199.2px">3</div>
<div class="rtx" style="left:984px;top:199.2px">0+0</div>
<div class="rtx" style="left:1017.5px;top:199.2px">AP006u</div>
<div class="row" style="top:215.6px"></div>
<div class="sel" style="top:215.6px"></div>
<div class="a" style="left:981px;top:215.6px;width:1px;height:20px;background:#9cc2ec"></div>
<div class="a" style="left:1015px;top:215.6px;width:1px;height:20px;background:#9cc2ec"></div>
<div class="a" style="left:950px;top:219.6px;width:12.5px;height:12.5px;background:#e600ff;border:1.6px solid #1e1e1e"></div>
<div class="rtx" style="left:967px;top:219.6px">4</div>
<div class="rtx" style="left:984px;top:219.6px">0+0</div>
<div class="rtx" style="left:1017.5px;top:219.6px">AP012</div>
<!-- sash -->
<div class="a" style="left:947px;top:364px;width:297px;height:1px;background:#bdbdbb"></div>
<!-- info box -->
<div class="a" style="left:947px;top:368px;width:297px;height:75px;background:#fff;border:1px solid #c2c2bf"></div>
<div class="a info" style="left:948.5px;top:370px">@4: 7469 points, 7469 active.<br>Filename: /home/aleplo/test/Desktop/IMAP/Experimental/<br>AP012/IR/AP012.CSV<br>Data title: AP012</div>
<!-- combo -->
<div class="a btn" style="left:947px;top:445px;width:296px;height:26px;border-radius:3px"></div>
<div class="a ui" style="left:955px;top:451px;font-size:11.4px">show only selected</div>
<svg class="a" style="left:1225px;top:455px" width="10" height="6"><path d="M0 0 L9 0 L4.5 5 Z" fill="#2e3436"/></svg>
<!-- spin 2 -->
<svg class="a" style="left:950px;top:481px" width="10" height="12" viewBox="0 0 10 12"><ellipse cx="6" cy="7.5" rx="3.4" ry="3.4" fill="#1a1a1a"/><circle cx="1.8" cy="4.6" r="1.3" fill="#1a1a1a"/><circle cx="3.6" cy="1.8" r="1.2" fill="#1a1a1a"/><circle cx="7" cy="1.6" r="1.1" fill="#1a1a1a"/><circle cx="1.6" cy="8" r="1.1" fill="#1a1a1a"/></svg>
<div class="a" style="left:960px;top:473px;width:29px;height:27px;background:#fff;border:1px solid #c8c8c5;border-radius:3px"></div>
<div class="a ui" style="left:967px;top:479px;font-size:12px">2</div>
<svg class="a" style="left:978px;top:477px" width="9" height="20"><path d="M1 5 L4.5 1 L8 5 Z M1 14 L8 14 L4.5 18 Z" fill="#2e3436"/></svg>
<div class="a" style="left:995px;top:480px;width:13px;height:13px;background:#f3f3f3;border:1px solid #b8b8b5;border-radius:3px"></div>
<div class="a ui" style="left:1012.5px;top:479px;font-size:11.4px">line</div>
<div class="a" style="left:1037px;top:480px;width:13px;height:13px;background:#f3f3f3;border:1px solid #b8b8b5;border-radius:3px"></div>
<div class="a ui" style="left:1054px;top:479px;font-size:12px">σ</div>
<!-- height icon -->
<svg class="a" style="left:1196px;top:479px" width="8" height="15" viewBox="0 0 8 15"><rect x="0.5" y="1.5" width="7" height="1.3" fill="#18e018"/><rect x="0.5" y="12" width="7" height="1.3" fill="#18e018"/><path d="M4 2.5 L4 12.5 M2 5 L4 2.5 L6 5 M2 10 L4 12.5 L6 10" stroke="#1a1a1a" stroke-width="1.3" fill="none"/></svg>
<div class="a" style="left:1206px;top:473px;width:37px;height:27px;background:#fff;border:1px solid #c8c8c5;border-radius:3px"></div>
<div class="a" style="left:1206px;top:473px;width:25px;height:27px;border:1.5px solid #4a90d9;border-radius:3px 0 0 3px"></div>
<div class="a" style="left:1213.5px;top:478px;width:1px;height:15px;background:#1a1a1a"></div>
<div class="a ui" style="left:1213.5px;top:479px;font-size:12px">12</div>
<svg class="a" style="left:1232px;top:477px" width="9" height="20"><path d="M1 5 L4.5 1 L8 5 Z M1 14 L8 14 L4.5 18 Z" fill="#2e3436"/></svg>
<!-- buttons -->
<div class="a btn" style="left:948px;top:501px;width:29px;height:30px"></div>
<div class="a btn" style="left:979px;top:501px;width:30px;height:30px"></div>
<div class="a btnl" style="left:1010px;top:501px;width:30px;height:30px"></div>
<div class="a btnl" style="left:1041px;top:501px;width:30px;height:30px"></div>
<div class="a btn" style="left:1072px;top:501px;width:30px;height:30px"></div>

<svg class="a" style="left:954px;top:508px" width="17" height="17" viewBox="0 0 17 17">
<rect x="0" y="0" width="17" height="17" fill="#111"/>
<rect x="1.2" y="1.2" width="4.3" height="4.3" fill="#f5a8a0"/><rect x="6.4" y="1.2" width="4.3" height="4.3" fill="#6c8ee8"/><rect x="11.6" y="1.2" width="4.3" height="4.3" fill="#f6eca0"/>
<rect x="1.2" y="6.4" width="4.3" height="4.3" fill="#f0dcc4"/><rect x="6.4" y="6.4" width="4.3" height="4.3" fill="#e8d8c8"/><rect x="11.6" y="6.4" width="4.3" height="4.3" fill="#f0b880"/>
<rect x="1.2" y="11.6" width="4.3" height="4.3" fill="#f8c0c0"/><rect x="6.4" y="11.6" width="4.3" height="4.3" fill="#60c860"/><rect x="11.6" y="11.6" width="4.3" height="4.3" fill="#88a8f0"/>
<path d="M7 4 L8.6 4 L8.8 8 L12 8.5 L12.5 14 L7.5 14.5 L6 10 L7 9.5 Z" fill="#d8c8b8" stroke="#605040" stroke-width="0.6"/>
</svg>
<svg class="a" style="left:986px;top:509px" width="14" height="15" viewBox="0 0 14 15"><path d="M0.8 0.8 L12.8 0.8 L13 4.2 L11.8 4.2 Q11.2 2.6 9.5 2.6 L4.2 2.6 L8.6 7.4 L3.8 12 L10 12 Q11.8 12 12.4 10.2 L13.4 10.2 L12.6 13.8 L0.6 13.8 L0.6 13 L5.8 7.6 L0.8 1.8 Z" fill="#000"/></svg>
<svg class="a" style="left:1015px;top:507px" width="20" height="19" viewBox="0 0 20 19">
<path d="M1.3 2.2 L4.5 1.8 L5.5 1 L7 1.5 L9.8 2.3 L9.9 11.6 L5.5 11.8 L1.1 11.9 Z" fill="#dcdcdc" stroke="#111" stroke-width="1.1" stroke-linejoin="round"/>
<path d="M5.4 2.2 L5.4 11.5" stroke="#222" stroke-width="0.9"/>
<path d="M2.8 3.5 V10.5 M7.5 3.5 V10.5" stroke="#fff" stroke-width="0.9"/>
<path d="M10.8 7.6 L14 7.3 L15.5 6.8 L18.8 7.2 L18.8 17.8 L14.5 17.6 L10.9 18 Z" fill="#dcdcdc" stroke="#111" stroke-width="1.1" stroke-linejoin="round"/>
<path d="M14.6 8 L14.6 17.4" stroke="#222" stroke-width="0.9"/>
<path d="M12.5 9 V16.5 M16.8 9 V16.5" stroke="#fff" stroke-width="0.9"/>
<path d="M9 8.5 L11.5 11 L10 11.5 Z" fill="#8ab08a" stroke="#5a8a5a" stroke-width="0.8"/>
</svg>
<svg class="a" style="left:1046px;top:510px" width="21" height="14" viewBox="0 0 21 14">
<rect x="1" y="1" width="19" height="11.5" fill="#fff"/>
<path d="M19.5 1.5 L1.5 1.5 L1.5 12.5 L19.5 12.5" fill="none" stroke="#222" stroke-width="1" stroke-dasharray="1.5 0.8"/>
<text x="2.6" y="10.6" font-family="Liberation Serif" font-size="9.5" fill="#333" textLength="16.5" lengthAdjust="spacingAndGlyphs">Inam</text>
</svg>
<svg class="a" style="left:1081px;top:511px" width="11" height="10" viewBox="0 0 11 10"><path d="M1.5 1 L9.5 9 M9.5 1 L1.5 9" stroke="#000" stroke-width="2.3" stroke-linecap="round"/></svg>


</div></body></html>
